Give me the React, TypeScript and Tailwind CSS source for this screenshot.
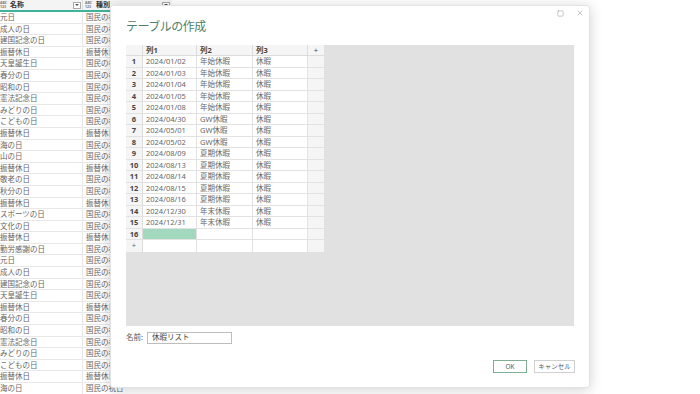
import { Square, X } from "lucide-react";

const holidays: [string, string][] = [
  ["元日", "国民の祝日"],
  ["成人の日", "国民の祝日"],
  ["建国記念の日", "国民の祝日"],
  ["振替休日", "振替休日"],
  ["天皇誕生日", "国民の祝日"],
  ["春分の日", "国民の祝日"],
  ["昭和の日", "国民の祝日"],
  ["憲法記念日", "国民の祝日"],
  ["みどりの日", "国民の祝日"],
  ["こどもの日", "国民の祝日"],
  ["振替休日", "振替休日"],
  ["海の日", "国民の祝日"],
  ["山の日", "国民の祝日"],
  ["振替休日", "振替休日"],
  ["敬老の日", "国民の祝日"],
  ["秋分の日", "国民の祝日"],
  ["振替休日", "振替休日"],
  ["スポーツの日", "国民の祝日"],
  ["文化の日", "国民の祝日"],
  ["振替休日", "振替休日"],
  ["勤労感謝の日", "国民の祝日"],
  ["元日", "国民の祝日"],
  ["成人の日", "国民の祝日"],
  ["建国記念の日", "国民の祝日"],
  ["天皇誕生日", "国民の祝日"],
  ["振替休日", "振替休日"],
  ["春分の日", "国民の祝日"],
  ["昭和の日", "国民の祝日"],
  ["憲法記念日", "国民の祝日"],
  ["みどりの日", "国民の祝日"],
  ["こどもの日", "国民の祝日"],
  ["振替休日", "振替休日"],
  ["海の日", "国民の祝日"],
];

const rows: [string, string, string][] = [
  ["2024/01/02", "年始休暇", "休暇"],
  ["2024/01/03", "年始休暇", "休暇"],
  ["2024/01/04", "年始休暇", "休暇"],
  ["2024/01/05", "年始休暇", "休暇"],
  ["2024/01/08", "年始休暇", "休暇"],
  ["2024/04/30", "GW休暇", "休暇"],
  ["2024/05/01", "GW休暇", "休暇"],
  ["2024/05/02", "GW休暇", "休暇"],
  ["2024/08/09", "夏期休暇", "休暇"],
  ["2024/08/13", "夏期休暇", "休暇"],
  ["2024/08/14", "夏期休暇", "休暇"],
  ["2024/08/15", "夏期休暇", "休暇"],
  ["2024/08/16", "夏期休暇", "休暇"],
  ["2024/12/30", "年末休暇", "休暇"],
  ["2024/12/31", "年末休暇", "休暇"],
];

const font = {
  fontFamily: '"Noto Sans", "Noto Sans CJK JP", sans-serif',
};

// 列タイプの小さいアイコン (ABC/123)
const TypeIcon = () => (
  <div className="flex flex-col text-[3.5px] leading-[4px] font-bold text-[#777]">
    <span>ABC</span>
    <span>123</span>
  </div>
);

const DropButton = () => (
  <div className="flex h-[7px] w-[8px] items-center justify-center border border-[#aaa] bg-white">
    <div className="h-0 w-0 border-x-[2px] border-t-[2px] border-x-transparent border-t-[#555]" />
  </div>
);

const App = () => {
  return (
    <div
      className="relative h-[394px] w-[700px] overflow-hidden bg-white text-[#444]"
      style={font}
    >
      {/* 背景のクエリテーブル */}
      <div className="w-[172px]">
        <div className="flex h-[10px] items-center bg-[#f4f4f4]">
          <div className="flex w-[83px] items-center gap-[3px] border-r border-[#ddd] pr-[1px]">
            <TypeIcon />
            <span className="flex-1 text-[7px] font-bold text-[#333]">名称</span>
            <DropButton />
          </div>
          <div className="flex flex-1 items-center gap-[4px] pl-[2px] pr-[2px]">
            <TypeIcon />
            <span className="flex-1 text-[7px] font-bold text-[#333]">種別</span>
            <DropButton />
          </div>
        </div>
        <div className="h-[2px] bg-[#3fb39a]" />
        {holidays.map(([name, kind], i) => (
          <div
            key={i}
            className="flex h-[11.6px] items-center border-b border-[#e8e8e8] text-[7.5px] text-[#666]"
          >
            <div className="h-full w-[83px] border-r border-[#e8e8e8] leading-[11px]">
              {name}
            </div>
            <div className="h-full flex-1 pl-[3px] leading-[11px]">{kind}</div>
          </div>
        ))}
      </div>

      {/* テーブルの作成 ダイアログ */}
      <div className="absolute left-[110px] top-[5px] flex h-[383px] w-[480px] flex-col rounded-[3px] border border-[#e3e3e3] bg-white shadow-[0_2px_14px_rgba(0,0,0,0.18)]">
        <div className="flex h-[11px] items-end justify-end gap-[12px] pr-[5px]">
          <Square size={7} strokeWidth={1.3} className="text-[#777]" />
          <X size={8} strokeWidth={1.3} className="text-[#777]" />
        </div>
        <div className="pl-[15px] pt-[2px] text-[12px] leading-[16px] tracking-[-0.5px] text-[#4f7f69]">
          テーブルの作成
        </div>
        <div className="mx-[15px] mt-[10px] h-[281px] bg-[#e1e1e1]">
          <div className="w-[198px] bg-white text-[7.5px]">
            <div className="flex h-[11px] border-b border-[#dcdcdc] bg-[#f5f5f5] font-bold text-[#444]">
              <div className="w-[17px] border-r border-[#dcdcdc]" />
              <div className="w-[54px] border-r border-[#dcdcdc] pl-[3px] leading-[10px]">列1</div>
              <div className="w-[56px] border-r border-[#dcdcdc] pl-[3px] leading-[10px]">列2</div>
              <div className="w-[55px] border-r border-[#dcdcdc] pl-[3px] leading-[10px]">列3</div>
              <div className="flex-1 text-center leading-[10px] font-normal">+</div>
            </div>
            {rows.map(([d, a, b], i) => (
              <div key={i} className="flex h-[11.5px] border-b border-[#e2e2e2] text-[#666]">
                <div className="w-[17px] border-r border-[#dcdcdc] bg-[#f5f5f5] text-center font-bold leading-[10.5px] text-[#444]">
                  {i + 1}
                </div>
                <div className="w-[54px] border-r border-[#e2e2e2] pl-[3px] leading-[10.5px]">{d}</div>
                <div className="w-[56px] border-r border-[#e2e2e2] pl-[3px] leading-[10.5px]">{a}</div>
                <div className="w-[55px] border-r border-[#e2e2e2] pl-[3px] leading-[10.5px]">{b}</div>
                <div className="flex-1 bg-[#f5f5f5]" />
              </div>
            ))}
            <div className="flex h-[11.5px] border-b border-[#e2e2e2]">
              <div className="w-[17px] border-r border-[#dcdcdc] bg-[#f5f5f5] text-center font-bold leading-[10.5px] text-[#444]">
                16
              </div>
              <div className="w-[54px] border-r border-[#e2e2e2] bg-[#a2d8bd]" />
              <div className="w-[56px] border-r border-[#e2e2e2]" />
              <div className="w-[55px] border-r border-[#e2e2e2]" />
              <div className="flex-1 bg-[#f5f5f5]" />
            </div>
            <div className="flex h-[11.5px]">
              <div className="w-[17px] border-r border-[#dcdcdc] bg-[#f5f5f5] text-center leading-[10.5px] text-[#666]">
                +
              </div>
              <div className="w-[54px] border-r border-[#e2e2e2]" />
              <div className="w-[56px] border-r border-[#e2e2e2]" />
              <div className="w-[55px] border-r border-[#e2e2e2]" />
              <div className="flex-1 bg-[#f5f5f5]" />
            </div>
          </div>
        </div>

        <div className="mt-[6px] flex items-center gap-[4px] pl-[15px] text-[7.5px] text-[#555]">
          <span>名前:</span>
          <div className="flex h-[12px] w-[85px] items-center border border-[#bdbdbd] pl-[4px] text-[#444]">
            休暇リスト
          </div>
        </div>

        <div className="mt-[16px] flex justify-end gap-[7px] pr-[14px] text-[6.5px] text-[#555]">
          <button className="flex h-[13px] w-[34px] items-center justify-center border border-[#7fae97] bg-white">
            OK
          </button>
          <button className="flex h-[13px] w-[41px] items-center justify-center border border-[#d0d0d0] bg-white">
            キャンセル
          </button>
        </div>
      </div>
    </div>
  );
};

export default App;
